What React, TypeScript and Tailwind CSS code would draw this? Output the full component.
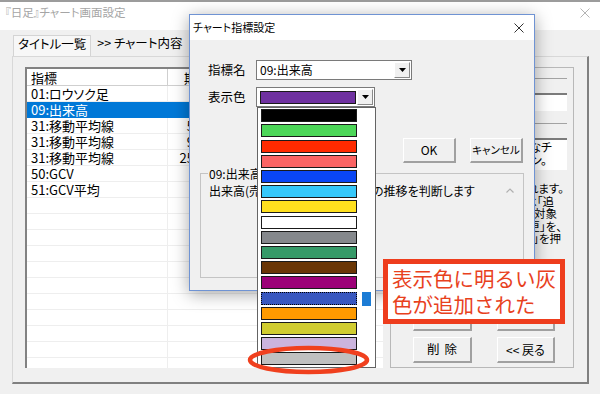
import React from "react";

const swatches = [
  "bg-[#000000]",
  "bg-[#4cd658]",
  "bg-[#ff2a00]",
  "bg-[#fa6464]",
  "bg-[#0a46f5]",
  "bg-[#36c8fa]",
  "bg-[#ffe01e]",
  "bg-[#ffffff]",
  "bg-[#85888c]",
  "bg-[#369a68]",
  "bg-[#6a3606]",
  "bg-[#9c0078]",
  "bg-[#3857bf]",
  "bg-[#ff9a00]",
  "bg-[#d0cc30]",
  "bg-[#cbb4de]",
  "bg-[#c0c0c0]",
];

const rows: { name: string; v: string; sel?: boolean }[] = [
  { name: "01:ロウソク足", v: "" },
  { name: "09:出来高", v: "", sel: true },
  { name: "31:移動平均線", v: "5" },
  { name: "31:移動平均線", v: "9" },
  { name: "31:移動平均線", v: "25" },
  { name: "50:GCV", v: "" },
  { name: "51:GCV平均", v: "" },
  ...Array.from({ length: 12 }, () => ({ name: "", v: "" })),
];

function CloseX({ color }: { color: string }) {
  return (
    <svg width="10" height="10" viewBox="0 0 10 10">
      <path d="M0.5 0.5L9.5 9.5M9.5 0.5L0.5 9.5" stroke={color} strokeWidth="1" />
    </svg>
  );
}

function Tri() {
  return (
    <svg width="7" height="4" viewBox="0 0 7 4">
      <path d="M0 0H7L3.5 4Z" fill="#000" />
    </svg>
  );
}

function Btn({ label, w, cls }: { label: string; w: string; cls?: string }) {
  return (
    <div
      className={`${w} h-[26px] flex items-center justify-center bg-[#f0f0f0] border-t border-l border-t-white border-l-white border-r-2 border-b-2 border-r-[#a0a0a0] border-b-[#a0a0a0] ${cls ?? "text-[12px]"} leading-none`}
    >
      {label}
    </div>
  );
}

export default function App() {
  return (
    <div className="relative w-[600px] h-[394px] overflow-hidden bg-[#f0f0f0] text-black font-['Noto_Sans_CJK_JP','Noto_Sans',sans-serif] [font-feature-settings:'palt']">
      {/* main window */}
      <div className="flex flex-col w-full h-full border-t-2 border-[#9c9c9c]">
        <div className="h-[28px] shrink-0 bg-white flex items-start justify-between pl-[5px] pr-[10px]">
          <div className="h-[22px] flex items-center text-[11.5px] leading-none text-[#a5a5a5]">
            『日足』チャート画面設定
          </div>
          <div className="h-[22px] flex items-center">
            <CloseX color="#b4b4b4" />
          </div>
        </div>
        <div className="h-[26px] shrink-0 flex items-end pl-[13px]">
          <div className="h-[21px] px-[4px] pb-[4px] flex items-center border border-b-0 border-[#d4d4d4] bg-[#f7f7f7] text-[12.5px] leading-none">
            タイトル一覧
          </div>
          <div className="h-[21px] ml-[6px] pb-[4px] flex items-center text-[12.5px] leading-none">
            &gt;&gt; チャート内容
          </div>
        </div>
        <div className="ml-[12px] w-[577px] h-[328px] shrink-0 flex gap-[7px] pl-[12px] pr-[13px] pt-[10px] pb-[14px] border-l border-t border-r-2 border-b-2 border-t-[#d8d8d8] border-l-[#d8d8d8] border-r-[#808080] border-b-[#808080]">
          {/* list view */}
          <div className="w-[358px] h-full bg-white border-l-2 border-t-2 border-l-[#828282] border-t-[#828282] overflow-hidden flex flex-col">
            <div className="h-[17px] shrink-0 flex border-b border-[#cfcfcf] text-[13px] leading-none">
              <div className="w-[141px] h-full flex items-center pl-[4px] border-r border-[#cfcfcf]">指標</div>
              <div className="h-full flex items-center pl-[16px]">期間</div>
            </div>
            {rows.map((r, i) => (
              <div
                key={i}
                className={`h-[16px] shrink-0 flex border-b text-[13px] leading-none ${
                  r.sel ? "bg-[#0078d7] text-white border-[#0078d7]" : "border-[#eeeeee]"
                }`}
              >
                <div
                  className={`w-[141px] h-full flex items-center pl-[4px] whitespace-nowrap border-r ${
                    r.sel ? "border-[#0078d7]" : "border-[#eeeeee]"
                  }`}
                >
                  {r.name}
                </div>
                <div className="w-[26px] h-full flex items-center justify-end">{r.v}</div>
              </div>
            ))}
          </div>
          {/* right group */}
          <div className="w-[184px] h-full border border-[#b8b8b8] flex flex-col pr-[6px] pb-[4px]">
            <div className="h-[11px] shrink-0 border-b border-[#a3a3a3]" />
            <div className="mt-[14px] h-[18px] shrink-0 bg-white border-t-2 border-[#7b7b7b]" />
            <div className="mt-[12px] h-[15px] shrink-0 border-t border-[#a3a3a3]" />
            <div className="h-[32px] shrink-0 bg-white border-t-2 border-[#7b7b7b] text-[12px] leading-[13px] whitespace-nowrap overflow-hidden">
              <div className="text-right pr-[15px]">ル的なチ</div>
              <div className="text-right pr-[20px]">ーン。</div>
            </div>
            <div className="mt-[12px] text-[11.5px] leading-[12.5px] whitespace-nowrap">
              <div className="text-right pr-[3px]">れます。</div>
              <div className="text-right pr-[13px]">は「追</div>
              <div className="text-right pr-[10px]">は対象</div>
              <div className="text-right pr-[5px]">変更」を、</div>
              <div className="text-right pr-[6px]">除」を押</div>
            </div>
            <div className="flex-1" />
            <div className="flex gap-[25px] pl-[22px]">
              <Btn label="" w="w-[59px]" />
              <Btn label="" w="w-[58px]" />
            </div>
            <div className="mt-[6px] flex gap-[25px] pl-[22px]">
              <Btn label="削除" w="w-[59px]" cls="text-[12.5px] tracking-[5px] pl-[5px]" />
              <Btn label="<< 戻る" w="w-[58px]" />
            </div>
          </div>
        </div>
      </div>

      {/* dialog */}
      <div className="absolute left-[189px] top-[14px] w-[346px] h-[277px] border border-[#6f93d3] bg-[#f0f0f0] shadow-[0_3px_16px_rgba(0,0,0,0.35)] flex flex-col">
        <div className="h-[25px] shrink-0 bg-white flex items-center justify-between pl-[3px] pr-[10px]">
          <span className="text-[11px] leading-none">チャート指標設定</span>
          <CloseX color="#333333" />
        </div>
        <div className="flex flex-col pl-[18px] pr-[11px]">
          <div className="mt-[20px] h-[20px] flex items-center">
            <div className="w-[48px] text-[12.5px] leading-none">指標名</div>
            <div className="w-[156px] h-[20px] border border-[#7a7a7a] bg-white flex items-center">
              <span className="flex-1 pl-[3px] text-[12px] leading-none">09:出来高</span>
              <div className="w-[16px] h-[16px] mr-[1px] flex items-center justify-center bg-[#f0f0f0] border border-t-white border-l-white border-r-[#8a8a8a] border-b-[#8a8a8a]">
                <Tri />
              </div>
            </div>
          </div>
          <div className="mt-[7px] h-[20px] flex items-center">
            <div className="w-[48px] text-[12.5px] leading-none">表示色</div>
            <div className="w-[119px] h-[20px] border border-[#7a7a7a] bg-white flex items-center">
              <div className="ml-[3px] w-[96px] h-[13px] bg-[#6f31a0] border border-[#1a1a1a]" />
              <div className="ml-auto w-[16px] h-[16px] mr-[1px] flex items-center justify-center bg-[#f0f0f0] border border-t-white border-l-white border-r-[#8a8a8a] border-b-[#8a8a8a]">
                <Tri />
              </div>
            </div>
          </div>
          <div className="mt-[31px] flex justify-end gap-[14px]">
            <div className="w-[53px] h-[25px] flex items-center justify-center bg-[#f0f0f0] border-t border-l border-t-white border-l-white border-r-2 border-b-2 border-r-[#a0a0a0] border-b-[#a0a0a0] text-[12px] leading-none">
              OK
            </div>
            <div className="w-[53px] h-[25px] flex items-center justify-center bg-[#f0f0f0] border-t border-l border-t-white border-l-white border-r-2 border-b-2 border-r-[#a0a0a0] border-b-[#a0a0a0] text-[10.5px] leading-none">
              キャンセル
            </div>
          </div>
        </div>
        <div className="mt-[10px] ml-[10px] w-[324px] h-[105px] shrink-0 border border-[#c4c4c4] flex flex-col">
          <div className="-mt-[9px] ml-[7px] w-fit px-[1px] bg-[#f0f0f0] text-[12px] leading-[17px]">09:出来高</div>
          <div className="h-[17px] flex items-center justify-between pl-[8px] pr-[9px] text-[12px] leading-none whitespace-nowrap">
            <div className="flex">
              <span className="w-[163px]">出来高(売買高)から相場</span>
              <span>の推移を判断します</span>
            </div>
            <svg width="8" height="5" viewBox="0 0 8 5">
              <path d="M0.5 4.5L4 1L7.5 4.5" stroke="#b0b0b0" strokeWidth="1.2" fill="none" />
            </svg>
          </div>
        </div>
      </div>

      {/* dropdown list */}
      <div className="absolute left-[257px] top-[107px] w-[119px] h-[261px] bg-white border border-[#646464] flex flex-col">
        {swatches.map((c, i) => (
          <div key={i} className="h-[15.2px] shrink-0 flex items-start pt-[1.3px] pl-[3px]">
            <div
              className={`w-[96px] h-[13px] border ${c} ${
                i === 12 ? "border-dotted border-[#000000]" : "border-[#1a1a1a]"
              }`}
            />
            {i === 12 && <div className="ml-[5px] w-[9px] h-[14px] bg-[#1c7cd5]" />}
          </div>
        ))}
      </div>

      {/* red ellipse */}
      <svg className="absolute left-[244px] top-[344px]" width="130" height="32" viewBox="0 0 130 32">
        <ellipse cx="64.5" cy="16" rx="58.5" ry="12" fill="none" stroke="#f0401e" strokeWidth="4.5" />
      </svg>

      {/* callout */}
      <div className="absolute left-[383px] top-[259px] w-[182px] h-[65px] bg-white border-[5px] border-[#ee3d1d] pl-[4px] pt-[1px] text-[20.5px] leading-[26px] text-[#e8411d] [font-feature-settings:normal] whitespace-nowrap">
        <div>表示色に明るい灰</div>
        <div>色が追加された</div>
      </div>
    </div>
  );
}
